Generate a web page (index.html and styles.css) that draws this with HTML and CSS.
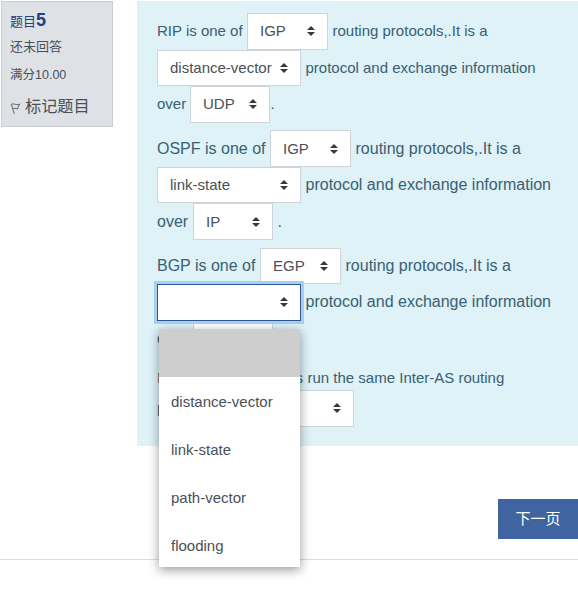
FILE: index.html
```
<!DOCTYPE html>
<html lang="zh-CN">
<head>
<meta charset="utf-8">
<title>题目5</title>
<link rel="stylesheet" href="styles.css">
</head>
<body>
<svg class="defs"><symbol id="arrows" viewBox="0 0 8 10"><path d="M4 0 8 4H0zM0 6H8L4 10z"/></symbol></svg>
<main class="question">
  <aside class="info">
    <h3>题目<b>5</b></h3>
    <p>还未回答</p>
    <p class="grade">满分10.00</p>
    <a class="flag"><svg viewBox="0 0 12 14"><path d="M1.2 3 4.3 13.2M1.4 3.3C4 1.8 5.5 4.5 9.5 3.4L7.6 7.6C6 8 5 6.5 2.7 7.9"/></svg>标记题目</a>
  </aside>
  <section class="content">
    <div class="para small">
      <div class="line"><span class="lead w86">RIP is one of</span><span class="select w81">IGP<svg><use href="#arrows"/></svg></span><span>routing protocols,.It is a</span></div>
      <div class="line"><span class="select w144">distance-vector<svg><use href="#arrows"/></svg></span><span>protocol and exchange information</span></div>
      <div class="line"><span class="lead w29">over</span><span class="select w80">UDP<svg><use href="#arrows"/></svg></span><span class="tight">.</span></div>
    </div>
    <div class="para">
      <div class="line"><span class="lead w109">OSPF is one of</span><span class="select w81">IGP<svg><use href="#arrows"/></svg></span><span>routing protocols,.It is a</span></div>
      <div class="line"><span class="select w144">link-state<svg><use href="#arrows"/></svg></span><span>protocol and exchange information</span></div>
      <div class="line"><span class="lead w32">over</span><span class="select w80">IP<svg><use href="#arrows"/></svg></span><span>.</span></div>
    </div>
    <div class="para">
      <div class="line"><span class="lead w99">BGP is one of</span><span class="select w81">EGP<svg><use href="#arrows"/></svg></span><span>routing protocols,.It is a</span></div>
      <div class="line"><span class="select w144 focus"><svg><use href="#arrows"/></svg>
        <span class="menu"><span class="option active"></span><span class="option">distance-vector</span><span class="option">link-state</span><span class="option">path-vector</span><span class="option">flooding</span></span>
      </span><span>protocol and exchange information</span></div>
      <div class="line"><span class="lead w32">over</span><span class="select w80"><svg><use href="#arrows"/></svg></span></div>
    </div>
    <div class="para small last">
      <div class="line text"><span class="lead spread">Different networks</span><span>run the same Inter-AS routing</span></div>
      <div class="line"><span class="lead w57">protocol</span><span class="select w135"><svg><use href="#arrows"/></svg></span></div>
    </div>
  </section>
</main>
<div class="nav"><button>下一页</button></div>
</body>
</html>
```
FILE: styles.css
```
* { box-sizing: border-box; }
body {
  margin: 0;
  height: 590px;
  overflow: hidden;
  background: #fff;
  font: 16px/24px "Liberation Sans", "Noto Sans CJK SC", sans-serif;
  color: #3a6072;
}
.defs { display: none; }
.question { display: flex; align-items: flex-start; gap: 24px; padding: 1px 0 0 1px; }
.info {
  flex: none;
  width: 112px;
  height: 126px;
  padding: 6px 8px;
  background: #dee2e6;
  border: 1px solid #caced4;
  color: #495057;
}
.info h3 { margin: 0; font-size: 13px; line-height: 25px; font-weight: 400; color: #23427c; white-space: nowrap; }
.info h3 b { font-size: 18px; }
.info p { margin: 0 0 4px; font-size: 13px; line-height: 24px; padding-top: 1px; }
.info .grade { font-size: 12.5px; padding: 0; }
.flag { display: flex; align-items: center; gap: 3px; margin-top: 7px; font-size: 16.2px; line-height: 24px; white-space: nowrap; }
.flag svg { width: 12px; height: 14px; margin-top: 4px; fill: none; stroke: #777; stroke-width: 1.1; }
.content { flex: 1; height: 445px; padding: 12px 0 0 20px; background: #def2f8; white-space: nowrap; }
.para { margin-bottom: 7.75px; }
.small { font-size: 15px; }
.line { display: flex; align-items: center; gap: 4.5px; height: 36.5px; }
.line.text { height: 24px; }
.lead { flex: none; }
.w29 { width: 28.5px; } .w32 { width: 31.5px; } .w57 { width: 56px; }
.w86 { width: 85.5px; } .w99 { width: 98.5px; } .w109 { width: 108.5px; }
.w80 { width: 80px; } .w81 { width: 81px; } .w135 { width: 136px; } .w144 { width: 144px; }
.tight { margin-left: -4px; }
.spread { width: 146px; text-align-last: justify; }
.last { padding-top: 1.25px; }
.select {
  position: relative;
  flex: none;
  display: flex;
  align-items: center;
  height: 36.5px;
  padding: 0 12px;
  background: #fff;
  border: 1px solid #ced4da;
  color: #495057;
  font-size: 15px;
}
.select > svg { width: 8px; height: 10px; margin-left: auto; fill: #343a40; }
.focus { border-color: #2d5794; box-shadow: 0 0 0 3px #a9cfef; z-index: 2; }
.menu {
  position: absolute;
  top: 44px;
  left: 1px;
  width: 141px;
  height: 238px;
  background: #fff;
  box-shadow: 0 3px 10px rgba(0, 0, 0, .4);
}
.option { display: flex; align-items: center; height: 48px; padding: 2px 0 0 12px; }
.option:last-child { height: 46px; padding-top: 4px; }
.active { background: #cecece; }
.nav { display: flex; justify-content: flex-end; height: 114px; padding-top: 53px; border-bottom: 1px solid #dcdcdc; }
.nav button {
  width: 80px;
  height: 40px;
  padding: 0;
  border: 0;
  background: #3f649f;
  color: #fff;
  font: 15px/40px "Liberation Sans", "Noto Sans CJK SC", sans-serif;
}
```
